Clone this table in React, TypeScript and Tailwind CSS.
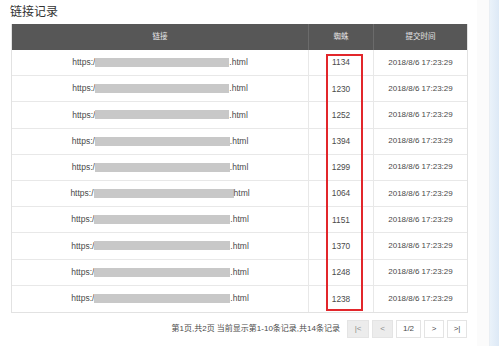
const rows = [
  { n: 1134, bar: 134, dot: true },
  { n: 1230, bar: 134, dot: true },
  { n: 1252, bar: 134, dot: true },
  { n: 1394, bar: 135, dot: true },
  { n: 1299, bar: 135, dot: true },
  { n: 1064, bar: 140, dot: false },
  { n: 1151, bar: 136, dot: true },
  { n: 1370, bar: 136, dot: true },
  { n: 1248, bar: 136, dot: true },
  { n: 1238, bar: 136, dot: true },
];

export default function App() {
  return (
    <div
      className="relative w-[499px] h-[346px] bg-white flex overflow-hidden text-[#4a4a4a]"
      style={{ fontFamily: '"Liberation Sans", "Noto Sans CJK SC", sans-serif' }}
    >
      <div className="w-[477px] pl-[11px]">
        {/* 标题 */}
        <div className="h-[24px] pt-[4px] -ml-[1px] text-[12px] leading-[16px] text-[#333]">链接记录</div>

        {/* 表格 */}
        <div className="w-[457px] border border-[#e2e2e2] border-t-0">
          <div className="grid grid-cols-[297px_65px_93px] h-[26px] bg-[#575757] text-[#e4e4e4] text-[7.5px]">
            <div className="flex items-center justify-center border-r border-[#6b6b6b]">链接</div>
            <div className="flex items-center justify-center border-r border-[#6b6b6b]">蜘蛛</div>
            <div className="flex items-center justify-center">提交时间</div>
          </div>
          {rows.map((r, i) => (
            <div
              key={i}
              className={`grid grid-cols-[297px_65px_93px] h-[26.2px] text-[8px] ${i < rows.length - 1 ? 'border-b border-[#e8e8e8]' : ''}`}
            >
              <div className="flex items-center justify-center border-r border-[#e8e8e8] text-[8.5px]">
                <span>https:/</span>
                <span className="h-[9px] bg-[#c8c8c8]" style={{ width: r.bar }}></span>
                <span>{r.dot ? '.html' : 'html'}</span>
              </div>
              <div className="flex items-center justify-center border-r border-[#e8e8e8] text-[8.3px]">{r.n}</div>
              <div className="flex items-center justify-center">2018/8/6 17:23:29</div>
            </div>
          ))}
        </div>

        {/* 分页 */}
        <div className="w-[456px] flex items-center justify-end mt-[7px] h-[18px] text-[8px]">
          <span className="mr-[7px]">第1页,共2页 当前显示第1-10条记录,共14条记录</span>
          <div className="flex gap-[2px]">
            <span className="w-[22px] h-[18px] flex items-center justify-center bg-[#ececec] border border-[#e4e4e4] text-[#888]">|&lt;</span>
            <span className="w-[21px] h-[18px] flex items-center justify-center bg-[#ececec] border border-[#e4e4e4] text-[#888] ml-[1px]">&lt;</span>
            <span className="w-[25px] h-[18px] flex items-center justify-center bg-white border border-[#e4e4e4] ml-[1px]">1/2</span>
            <span className="w-[20px] h-[18px] flex items-center justify-center bg-white border border-[#e4e4e4] ml-[1px]">&gt;</span>
            <span className="w-[20px] h-[18px] flex items-center justify-center bg-white border border-[#e4e4e4] ml-[1px]">&gt;|</span>
          </div>
        </div>
      </div>

      {/* 右侧背景 */}
      <div className="w-[12px] bg-[#fbfbfb]"></div>
      <div className="flex-1 border-l border-[#e9eef3] bg-gradient-to-r from-[#eaf2fa] to-[#dde9f6]"></div>

      {/* 红色标注框 */}
      <div className="absolute left-[326px] top-[54px] w-[37px] h-[257px] border-2 border-[#e2262b]"></div>
    </div>
  );
}
